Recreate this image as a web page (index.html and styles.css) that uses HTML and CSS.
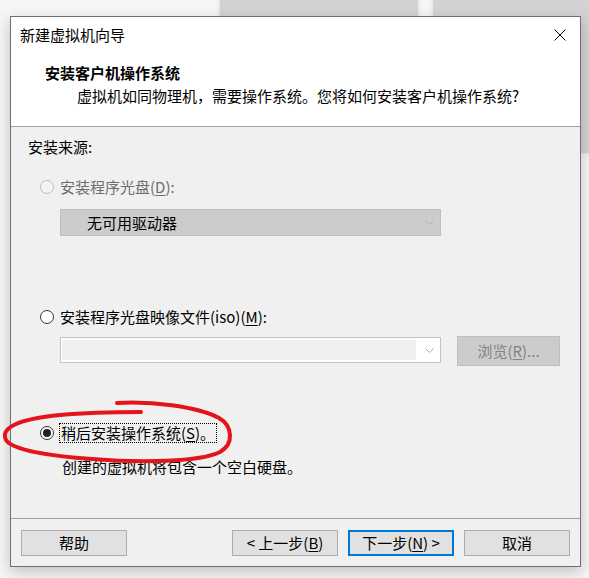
FILE: index.html
```html
<!DOCTYPE html>
<html lang="zh-CN">
<head>
<meta charset="utf-8">
<title>新建虚拟机向导</title>
<link rel="stylesheet" href="styles.css">
</head>
<body>
<div class="desk">
  <div class="bgwin bgwin-a"></div>
  <div class="bgwin bgwin-b"></div>
  <div class="dialog">
    <div class="top">
      <div class="titlebar">
        <span class="title">新建虚拟机向导</span>
        <svg class="close" width="12" height="12" viewBox="0 0 12 12"><path d="M0.5 0.5 L11.5 11.5 M11.5 0.5 L0.5 11.5" stroke="#000" stroke-width="1" fill="none"/></svg>
      </div>
      <div class="header">
        <div class="h-title">安装客户机操作系统</div>
        <div class="h-sub">虚拟机如同物理机，需要操作系统。您将如何安装客户机操作系统?</div>
      </div>
    </div>
    <div class="content">
      <div class="label">安装来源:</div>
      <div class="opt opt-1 is-disabled"><span class="radio radio-disabled"></span><span class="opt-text">安装程序光盘(<u>D</u>):</span></div>
      <div class="select">
        <span class="select-text">无可用驱动器</span>
        <svg class="chev" width="9" height="5" viewBox="0 0 9 5"><path d="M0.5 0.5 L4.5 4.5 L8.5 0.5" stroke="#b0b0b0" fill="none"/></svg>
      </div>
      <div class="opt opt-2"><span class="radio"></span><span class="opt-text">安装程序光盘映像文件(iso)(<u>M</u>):</span></div>
      <div class="iso-row">
        <div class="combo">
          <div class="combo-edit"></div>
          <svg class="chev" width="9" height="5" viewBox="0 0 9 5"><path d="M0.5 0.5 L4.5 4.5 L8.5 0.5" stroke="#a8a8a8" fill="none"/></svg>
        </div>
        <div class="btn browse">浏览(<u>R</u>)...</div>
      </div>
      <div class="opt opt-3"><span class="radio radio-checked"></span><span class="opt-text focus">稍后安装操作系统(<u>S</u>)。</span></div>
      <div class="desc">创建的虚拟机将包含一个空白硬盘。</div>
    </div>
    <div class="footer">
      <div class="btn btn-normal">帮助</div>
      <div class="spacer"></div>
      <div class="btn btn-normal">&lt; 上一步(<u>B</u>)</div>
      <div class="btn btn-normal btn-default">下一步(<u>N</u>) &gt;</div>
      <div class="btn btn-normal">取消</div>
    </div>
  </div>
  <svg class="scribble" width="589" height="578" viewBox="0 0 589 578">
    <path d="M117 403 C150 401 196 406 219 418 C233 426 234 444 220 452 C200 462 140 463 92 459 C50 456 12 450 6 440 C0 428 18 419 60 415 C92 412 120 412 141 412" stroke="#e3141b" stroke-width="4" fill="none" stroke-linecap="round" stroke-linejoin="round"/>
  </svg>
</div>
</body>
</html>
```
FILE: styles.css
```css
* { box-sizing: border-box; }
html, body { margin: 0; padding: 0; }
body {
  background: #f6f6f6;
  font-family: "Noto Sans CJK SC", "Noto Sans", sans-serif;
  font-size: 15px;
  color: #000;
}
.desk {
  position: relative;
  width: 589px;
  height: 578px;
  overflow: hidden;
  background: #f6f6f6;
  padding: 16px 0 0 10px;
}
.bgwin {
  position: absolute;
  top: -10px;
  height: 163px;
  background: #d3d3d3;
  box-shadow: 0 0 5px rgba(0,0,0,0.12);
}
.bgwin-a { left: 220px; width: 198px; }
.bgwin-b { left: 433px; width: 170px; }

.dialog {
  position: relative;
  z-index: 1;
  width: 571px;
  height: 551px;
  border: 1px solid #6f6f6f;
  background: #f0f0f0;
  display: flex;
  flex-direction: column;
  box-shadow: 0 5px 14px rgba(0,0,0,0.22);
}
.top {
  background: #fff;
  height: 110px;
  border-bottom: 1px solid #a0a0a0;
  flex: none;
}
.titlebar {
  height: 36px;
  display: flex;
  align-items: center;
  justify-content: space-between;
  padding: 0 14px 0 9px;
}
.title { line-height: 20px; }
.close { display: block; }
.header { padding-top: 10px; }
.h-title {
  padding-left: 34px;
  font-weight: bold;
  line-height: 20px;
}
.h-sub {
  margin-top: 3px;
  padding-left: 66px;
  line-height: 20px;
}

.content {
  flex: 1;
  padding: 10px 0 0 17px;
}
.label { line-height: 20px; }
.opt {
  display: flex;
  align-items: center;
  height: 20px;
  padding-left: 12px;
  line-height: 20px;
}
.opt-1 { margin-top: 20px; }
.opt-2 { margin-top: 71px; }
.opt-3 { margin-top: 57px; }
.radio {
  width: 14px;
  height: 14px;
  border-radius: 50%;
  border: 1px solid #333;
  background: #fff;
  flex: none;
  margin-right: 6px;
  display: flex;
  align-items: center;
  justify-content: center;
}
.radio-disabled { border-color: #bcbcbc; background: #f4f4f4; }
.radio-checked::after {
  content: "";
  width: 8px;
  height: 8px;
  border-radius: 50%;
  background: #222;
}
.opt-3 .radio { margin-right: 5px; }
.is-disabled .opt-text { color: #6d6d6d; }
.focus {
  border: 1px dotted #000;
  padding: 0 1px;
  line-height: 18px;
}
u { text-underline-offset: 2px; }

.select {
  margin: 12px 0 0 32px;
  width: 381px;
  height: 27px;
  background: #cccccc;
  border: 1px solid #bfbfbf;
  display: flex;
  align-items: center;
  justify-content: space-between;
  padding: 0 6px 0 26px;
}
.select-text { line-height: 20px; }
.chev { display: block; flex: none; }

.iso-row {
  margin-top: 9px;
  padding-left: 32px;
  display: flex;
  align-items: flex-start;
}
.combo {
  margin-top: 1px;
  width: 381px;
  height: 26px;
  border: 1px solid #c3c3c3;
  background: #fff;
  padding: 2px 6px 2px 1px;
  display: flex;
  align-items: center;
  justify-content: space-between;
}
.combo-edit {
  width: 354px;
  height: 20px;
  background: #f0f0f0;
}
.btn {
  display: flex;
  align-items: center;
  justify-content: center;
  line-height: 20px;
}
.browse {
  margin-left: 16px;
  width: 103px;
  height: 30px;
  background: #cccccc;
  border: 1px solid #bfbfbf;
  color: #838383;
}
.desc {
  margin-top: 14px;
  padding-left: 34px;
  line-height: 20px;
}

.footer {
  flex: none;
  height: 48px;
  border-top: 1px solid #a0a0a0;
  display: flex;
  align-items: flex-start;
  padding: 11px 10px 0 10px;
  gap: 10px;
}
.spacer { flex: 1; }
.btn-normal {
  width: 106px;
  height: 26px;
  background: #e1e1e1;
  border: 1px solid #adadad;
}
.btn-default { border: 2px solid #0078d7; }

.scribble {
  position: absolute;
  left: 0;
  top: 0;
  z-index: 2;
  pointer-events: none;
}
```
